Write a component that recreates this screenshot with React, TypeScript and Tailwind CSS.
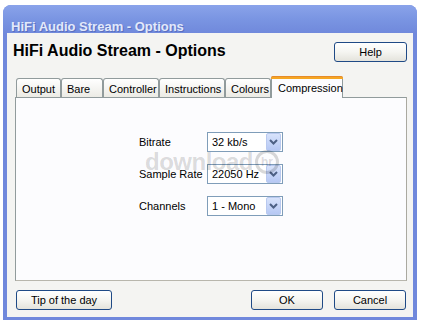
import React from "react";

const font = { fontFamily: '"Liberation Sans", Arial, sans-serif' };

function XPButton({ label, w }: { label: string; w: string }) {
  return (
    <div
      className={`${w} h-[20px] flex items-center justify-center rounded-[3px] border border-[#1f4a86] bg-gradient-to-b from-[#ffffff] via-[#f5f5f1] to-[#e4e3dc] text-[11px] text-black`}
    >
      {label}
    </div>
  );
}

function Select({ value }: { value: string }) {
  return (
    <div className="w-[76px] h-[20px] border border-[#7f9db9] bg-white flex items-center">
      <span className="flex-1 pl-[4px] text-[11px] text-black leading-none">{value}</span>
      <div className="w-[15px] h-[18px] mr-[1px] rounded-[2px] border border-[#b9c9ef] bg-gradient-to-b from-[#d8e3fb] to-[#b6c8f4] flex items-center justify-center">
        <svg width="9" height="6" viewBox="0 0 9 6">
          <path d="M1 1 L4.5 4.5 L8 1" fill="none" stroke="#4d6185" strokeWidth="2" />
        </svg>
      </div>
    </div>
  );
}

function Tab({ label, w, selected }: { label: string; w: string; selected?: boolean }) {
  if (selected) {
    return (
      <div
        className={`${w} h-[22px] -mb-[1px] relative z-10 border-x border-[#919b9c] bg-[#fcfcfe] rounded-t-[3px] flex flex-col`}
      >
        <div className="h-[3px] bg-[#f5a623] rounded-t-[2px] -mx-[1px] border-t border-[#e68b2c]" />
        <div className="flex-1 pl-[6px] pt-[1px] text-[11px] text-black">{label}</div>
      </div>
    );
  }
  return (
    <div
      className={`${w} h-[19px] mt-[2px] border-t border-x border-[#919b9c] rounded-t-[3px] bg-gradient-to-b from-[#ffffff] to-[#ecebe5] pl-[5px] pt-[2px] text-[11px] text-black`}
    >
      {label}
    </div>
  );
}

export default function App() {
  return (
    <div className="w-[423px] h-[326px] bg-white pt-[5px] pl-[3px]" style={font}>
      <div className="w-[414px] h-[315px] rounded-t-[8px] bg-[#7088dc] flex flex-col">
        {/* Title bar */}
        <div className="h-[28px] rounded-t-[8px] bg-gradient-to-b from-[#8aa3ea] via-[#7a95e2] to-[#7089dc] pl-[8px] pt-[9px]">
          <span className="text-[13px] font-bold text-[#e2e9fb] leading-none [text-shadow:1px_1px_0_#5a70c0]">
            HiFi Audio Stream - Options
          </span>
        </div>
        {/* Client */}
        <div className="flex-1 mx-[4px] mb-[3px] bg-[#f4f4f2] flex flex-col">
          <div className="flex justify-between items-start pt-[8px] pl-[6px] pr-[6px] h-[43px]">
            <div className="text-[16px] leading-[20px] font-bold text-black">HiFi Audio Stream - Options</div>
            <div className="mt-[1px]">
              <XPButton label="Help" w="w-[73px]" />
            </div>
          </div>
          {/* Tabs */}
          <div className="pl-[9px] flex items-end h-[21px]">
            <Tab label="Output" w="w-[45px]" />
            <Tab label="Bare" w="w-[42px]" />
            <Tab label="Controller" w="w-[56px]" />
            <Tab label="Instructions" w="w-[66px]" />
            <Tab label="Colours" w="w-[46px]" />
            <Tab label="Compression" w="w-[72px]" selected />
          </div>
          <div className="ml-[8px] w-[392px] h-[184px] border border-[#919b9c] border-b-[#b8b6ad] border-r-[#aaa9a0] bg-[#fcfcfe] relative">
            <div className="pl-[123px] pt-[34px] flex flex-col gap-[12px]">
              <div className="flex items-center">
                <span className="w-[68px] text-[11px] text-black">Bitrate</span>
                <Select value="32 kb/s" />
              </div>
              <div className="flex items-center">
                <span className="w-[68px] text-[11px] text-black">Sample Rate</span>
                <Select value="22050 Hz" />
              </div>
              <div className="flex items-center">
                <span className="w-[68px] text-[11px] text-black">Channels</span>
                <Select value="1 - Mono" />
              </div>
            </div>
            {/* watermark */}
            <div className="absolute left-[129px] top-[52px] flex items-center pointer-events-none">
              <span className="text-[24px] font-bold leading-none text-black/15 tracking-[-0.5px]">download</span>
              <span className="ml-[2px] w-[24px] h-[24px] rounded-full border-[3px] border-black/15 flex items-center justify-center text-[12px] font-bold text-black/15">
                hr
              </span>
            </div>
          </div>
          <div className="flex pl-[9px] pr-[7px] mt-[9px]">
            <XPButton label="Tip of the day" w="w-[96px]" />
            <div className="flex-1" />
            <XPButton label="OK" w="w-[72px]" />
            <div className="w-[11px]" />
            <XPButton label="Cancel" w="w-[72px]" />
          </div>
        </div>
      </div>
    </div>
  );
}
